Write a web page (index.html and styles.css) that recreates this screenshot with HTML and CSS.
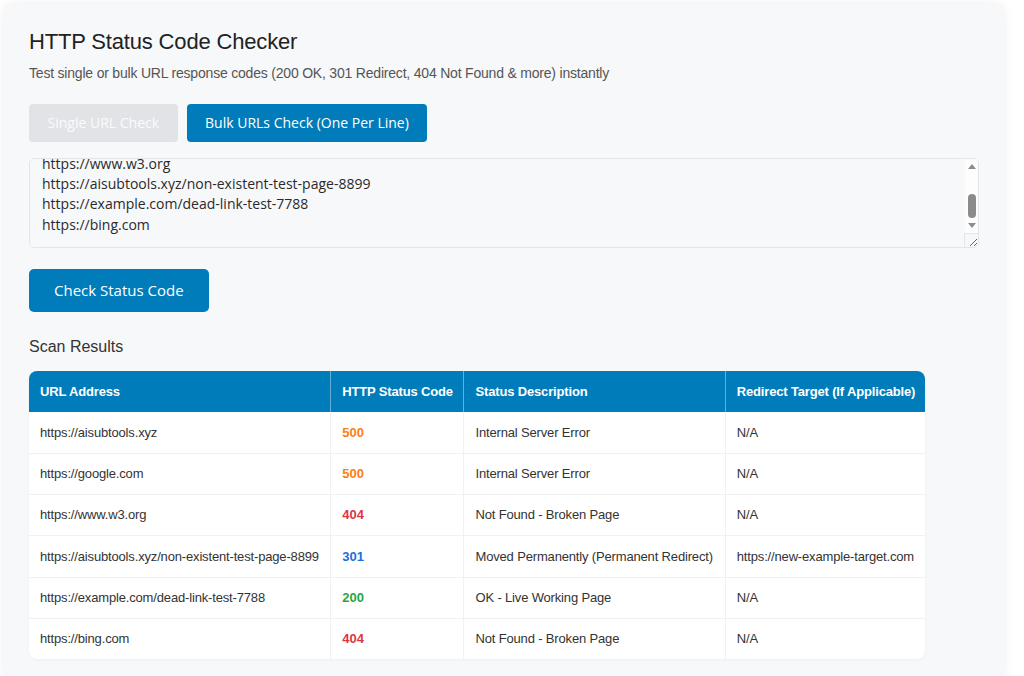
FILE: index.html
```html
<!DOCTYPE html>
<html lang="en">
<head>
    <meta charset="UTF-8">
    <meta name="viewport" content="width=device-width, initial-scale=1.0">
    <title>HTTP Status Code Checker</title>
    <link rel="stylesheet" href="styles.css">
</head>
<body>

    <div class="checker-card">
        <h1 class="checker-title">HTTP Status Code Checker</h1>
        <p class="checker-subtitle">Test single or bulk URL response codes (200 OK, 301 Redirect, 404 Not Found &amp; more) instantly</p>

        <!-- Mode tabs -->
        <div class="mode-tabs">
            <button class="mode-btn">Single URL Check</button>
            <button class="mode-btn active">Bulk URLs Check (One Per Line)</button>
        </div>

        <div class="input-wrap">
            <textarea id="url-input" class="url-input" spellcheck="false">https://aisubtools.xyz
https://google.com
https://www.w3.org
https://aisubtools.xyz/non-existent-test-page-8899
https://example.com/dead-link-test-7788
https://bing.com</textarea>
            <!-- scrollbar look (screenshots hide the native one) -->
            <div class="fake-scroll" aria-hidden="true">
                <span class="fake-arrow up"></span>
                <span class="fake-track"><span class="fake-thumb"></span></span>
                <span class="fake-arrow down"></span>
            </div>
            <div class="fake-corner" aria-hidden="true"></div>
        </div>

        <button class="check-btn">Check Status Code</button>

        <h2 class="results-title">Scan Results</h2>

        <div class="results-wrap">
            <table class="results-table">
                <thead>
                    <tr>
                        <th class="col-url">URL Address</th>
                        <th class="col-code">HTTP Status Code</th>
                        <th class="col-desc">Status Description</th>
                        <th class="col-target">Redirect Target (If Applicable)</th>
                    </tr>
                </thead>
                <tbody>
                    <tr>
                        <td>https://aisubtools.xyz</td>
                        <td class="code code-500">500</td>
                        <td>Internal Server Error</td>
                        <td>N/A</td>
                    </tr>
                    <tr>
                        <td>https://google.com</td>
                        <td class="code code-500">500</td>
                        <td>Internal Server Error</td>
                        <td>N/A</td>
                    </tr>
                    <tr>
                        <td>https://www.w3.org</td>
                        <td class="code code-404">404</td>
                        <td>Not Found - Broken Page</td>
                        <td>N/A</td>
                    </tr>
                    <tr>
                        <td>https://aisubtools.xyz/non-existent-test-page-8899</td>
                        <td class="code code-301">301</td>
                        <td>Moved Permanently (Permanent Redirect)</td>
                        <td>https://new-example-target.com</td>
                    </tr>
                    <tr>
                        <td>https://example.com/dead-link-test-7788</td>
                        <td class="code code-200">200</td>
                        <td>OK - Live Working Page</td>
                        <td>N/A</td>
                    </tr>
                    <tr>
                        <td>https://bing.com</td>
                        <td class="code code-404">404</td>
                        <td>Not Found - Broken Page</td>
                        <td>N/A</td>
                    </tr>
                </tbody>
            </table>
        </div>
    </div>

    <script src="script.js"></script>
</body>
</html>
```

FILE: styles.css
```css
body {
    margin: 0;
    padding: 4px;
    background-color: #ffffff;
    font-family: "Liberation Sans", Arial, sans-serif;
    color: #333;
}

/* Main card */
.checker-card {
    box-sizing: border-box;
    max-width: 1000px;
    background-color: #f7f8fa;
    border-radius: 10px;
    box-shadow: 0 0 12px rgba(0, 0, 0, 0.07);
    padding: 25px;
}

.checker-title {
    font-size: 22px;
    font-weight: 400;
    letter-spacing: -0.17px;
    color: #222;
    margin: 0 0 10px;
}

.checker-subtitle {
    font-size: 14px;
    letter-spacing: -0.2px;
    color: #555;
    margin: 0 0 23px;
}

/* Mode tabs */
.mode-tabs {
    display: flex;
    gap: 9px;
    margin-bottom: 16px;
}

.mode-btn {
    height: 38px;
    padding: 0 18.5px 2px;
    border: none;
    border-radius: 4px;
    background-color: #e1e3e7;
    color: #fafbfc;
    font-family: "Open Sans", sans-serif;
    font-size: 14px;
    cursor: pointer;
}

.mode-btn.active {
    background-color: #007cba;
    color: #ffffff;
}

/* URL input */
.input-wrap {
    position: relative;
}

.url-input {
    display: block;
    box-sizing: border-box;
    width: 100%;
    height: 90px;
    margin: 0;
    padding: 12px;
    border: 1px solid #e1e4e8;
    border-radius: 6px;
    background-color: #f7f8fa;
    color: #2a2a2a;
    font-family: "Open Sans", sans-serif;
    font-size: 14px;
    line-height: 20.33px;
    resize: vertical;
    outline: none;
    scrollbar-width: none;
}

.fake-scroll {
    position: absolute;
    top: 1px;
    right: 1px;
    bottom: 15px;
    width: 13px;
    display: flex;
    flex-direction: column;
    background-color: #fdfdfd;
    border-top-right-radius: 5px;
    pointer-events: none;
}

.fake-arrow {
    height: 15px;
    flex: none;
    position: relative;
}

.fake-arrow::after {
    content: '';
    position: absolute;
    left: 2.5px;
    top: 5px;
    border-left: 4px solid transparent;
    border-right: 4px solid transparent;
}

.fake-arrow.up::after {
    border-bottom: 5px solid #8c8c8c;
}

.fake-arrow.down::after {
    border-top: 5px solid #8c8c8c;
}

.fake-track {
    flex: 1;
    display: flex;
    flex-direction: column;
    justify-content: flex-end;
    align-items: center;
}

.fake-thumb {
    width: 8px;
    height: 24px;
    border-radius: 4px;
    background-color: #8b8b8b;
}

.fake-corner {
    position: absolute;
    right: 1px;
    bottom: 1px;
    width: 13px;
    height: 13px;
    border-top: 1px solid #e6e6e6;
    border-left: 1px solid #e6e6e6;
    border-bottom-right-radius: 5px;
    pointer-events: none;
}

/* Check button */
.check-btn {
    display: block;
    height: 43px;
    margin-top: 21px;
    padding: 0 25px 2px;
    border: none;
    border-radius: 5px;
    background-color: #007cba;
    color: #ffffff;
    font-family: "Open Sans", sans-serif;
    font-size: 15px;
    cursor: pointer;
}

.results-title {
    font-size: 16px;
    font-weight: 400;
    color: #333;
    margin: 26px 0 14.5px;
}

/* Results table */
.results-wrap {
    width: fit-content;
    border-radius: 8px;
    overflow: hidden;
    background-color: #ffffff;
    box-shadow: 0 1px 3px rgba(0, 0, 0, 0.04);
}

.results-table {
    table-layout: fixed;
    width: 896px;
    border-collapse: separate;
    border-spacing: 0;
    font-size: 13px;
    letter-spacing: -0.16px;
}

.results-table th,
.results-table td {
    text-align: left;
    padding: 12.5px 11px;
    line-height: 15.33px;
    white-space: nowrap;
}

.results-table th {
    padding-top: 13.2px;
    padding-bottom: 13.2px;
    background-color: #007cba;
    color: #ffffff;
    font-weight: 700;
    border-right: 1px solid rgba(255, 255, 255, 0.4);
}

.results-table td {
    color: #333;
    border-right: 1px solid #f0f1f3;
    border-bottom: 1px solid #f0f1f3;
}

.results-table th:last-child,
.results-table td:last-child {
    border-right: none;
}

.results-table tr:last-child td {
    border-bottom: none;
}

.col-url { width: 279px; }
.col-code { width: 110px; }
.col-desc { width: 238px; }
.col-target { width: 177px; }

.results-table .code {
    font-weight: 700;
    letter-spacing: 0;
}

.results-table .code-500 { color: #fd7e14; }
.results-table .code-404 { color: #dc3545; }
.results-table .code-301 { color: #1a6fdf; }
.results-table .code-200 { color: #28a745; }
```

FILE: script.js
```js
// Show the end of the list, like after pasting a batch of URLs
const urlInput = document.getElementById('url-input');
urlInput.scrollTop = urlInput.scrollHeight;
```
